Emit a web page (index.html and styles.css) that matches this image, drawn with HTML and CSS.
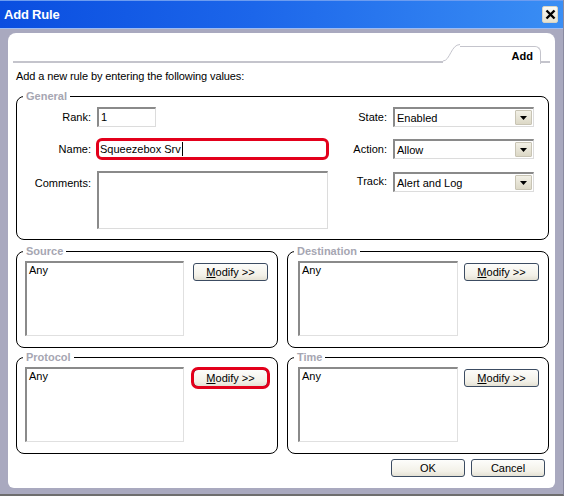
FILE: index.html
```html
<!DOCTYPE html>
<html lang="en">
<head>
<meta charset="utf-8">
<title>Add Rule</title>
<link rel="stylesheet" href="styles.css">
</head>
<body>
<div class="window">
  <div class="titlebar">
    <span class="title">Add Rule</span>
    <span class="close"><svg width="11" height="11" viewBox="0 0 11 11"><path d="M1.5 1.5 L9.5 9.5 M9.5 1.5 L1.5 9.5" stroke="#000" stroke-width="2.4" fill="none"/></svg></span>
  </div>
  <div class="client">
    <div class="panel">
      <div class="tabstrip">
        <div class="tabline"></div>
        <svg class="tabslope" width="17" height="18" viewBox="0 0 17 18"><path d="M0 17 C7 17 8 0.5 17 0.5" stroke="#c4c4cc" stroke-width="1" fill="none"/></svg>
        <div class="tab">Add</div>
        <div class="tabline tabline-end"></div>
      </div>
      <p class="intro">Add a new rule by entering the following values:</p>

      <fieldset class="group general">
        <legend>General</legend>
        <div class="general-grid">
          <span class="lbl">Rank:</span>
          <div class="field rank">1</div>
          <span class="lbl">State:</span>
          <div class="select"><span class="sel-text">Enabled</span><span class="arrow"><svg width="7" height="4" viewBox="0 0 7 4"><path d="M0 0 H7 L3.5 4 Z" fill="#000"/></svg></span></div>

          <span class="lbl">Name:</span>
          <div class="field name hl">Squeezebox Srv<span class="caret"></span></div>
          <span class="lbl">Action:</span>
          <div class="select"><span class="sel-text">Allow</span><span class="arrow"><svg width="7" height="4" viewBox="0 0 7 4"><path d="M0 0 H7 L3.5 4 Z" fill="#000"/></svg></span></div>

          <span class="lbl lbl-top">Comments:</span>
          <div class="field comments"></div>
          <span class="lbl lbl-top2">Track:</span>
          <div class="select select-top"><span class="sel-text">Alert and Log</span><span class="arrow"><svg width="7" height="4" viewBox="0 0 7 4"><path d="M0 0 H7 L3.5 4 Z" fill="#000"/></svg></span></div>
        </div>
      </fieldset>

      <div class="groups">
        <fieldset class="group">
          <legend>Source</legend>
          <div class="group-body">
            <div class="listbox">Any</div>
            <button class="btn"><u>M</u>odify &gt;&gt;</button>
          </div>
        </fieldset>
        <fieldset class="group">
          <legend>Destination</legend>
          <div class="group-body right">
            <div class="listbox">Any</div>
            <button class="btn"><u>M</u>odify &gt;&gt;</button>
          </div>
        </fieldset>
        <fieldset class="group">
          <legend>Protocol</legend>
          <div class="group-body">
            <div class="listbox">Any</div>
            <button class="btn hl"><u>M</u>odify &gt;&gt;</button>
          </div>
        </fieldset>
        <fieldset class="group">
          <legend>Time</legend>
          <div class="group-body right">
            <div class="listbox">Any</div>
            <button class="btn"><u>M</u>odify &gt;&gt;</button>
          </div>
        </fieldset>
      </div>

      <div class="footer">
        <button class="btn">OK</button>
        <button class="btn">Cancel</button>
      </div>
    </div>
  </div>
</div>
</body>
</html>
```

FILE: styles.css
```css
html, body {
  margin: 0;
  padding: 0;
  background: #fff;
}

body {
  font-family: "Liberation Sans", Arial, sans-serif;
  font-size: 11px;
  color: #000;
}

.window {
  width: 564px;
  height: 496px;
  box-sizing: border-box;
  background: #a9a9bf;
  border-bottom: 2px solid #6e6e6e;
  border-right: 1px solid #8a8aa0;
  display: flex;
  flex-direction: column;
}

.titlebar {
  flex: none;
  height: 29px;
  box-sizing: border-box;
  border-top: 1px solid #6c9cf0;
  border-bottom: 1px solid #9cbcf4;
  background: linear-gradient(to right, #0a4ee0 0%, #1c66ea 45%, #3a8ef4 100%);
  display: flex;
  align-items: center;
  justify-content: space-between;
  padding: 0 5px 0 4px;
}

.title {
  color: #fff;
  font-weight: bold;
  font-size: 13px;
  letter-spacing: -0.2px;
}

.close {
  width: 16px;
  height: 17px;
  box-sizing: border-box;
  background: linear-gradient(#fbfaf4, #e6e2d0);
  border: 1px solid #d8d4c4;
  border-radius: 2px;
  display: flex;
  align-items: center;
  justify-content: center;
}

.client {
  flex: 1;
  display: flex;
  padding: 4px 8px 6px 8px;
}

.panel {
  flex: 1;
  background: #fff;
  border-radius: 8px 8px 6px 6px;
  padding: 0 6px 0 8px;
  display: flex;
  flex-direction: column;
}

/* tab strip */
.tabstrip {
  height: 30px;
  margin: 0 -1px 0 -3px;
  display: flex;
  align-items: flex-end;
}

.tabline {
  flex: 1;
  border-bottom: 2px solid #c4c4cc;
}

.tabline-end {
  flex: none;
  width: 9px;
}

.tabslope {
  flex: none;
  display: block;
  margin-bottom: 1px;
}

.tab {
  flex: none;
  width: 81px;
  height: 18px;
  box-sizing: border-box;
  border-top: 1px solid #c4c4cc;
  border-right: 1px solid #c4c4cc;
  border-top-right-radius: 6px;
  font-weight: bold;
  text-align: right;
  padding: 3px 7px 0 0;
  line-height: 13px;
  margin-bottom: -1px;
}

.intro {
  margin: 7px 0 0;
  line-height: 13px;
  letter-spacing: -0.1px;
}

/* group boxes */
.group {
  margin: 0;
  padding: 0;
  border: 1px solid #000;
  border-radius: 8px;
  min-width: 0;
}

.group legend {
  margin-left: 6px;
  padding: 0 3px;
  font-weight: bold;
  color: #a6a6b2;
  line-height: 13px;
}

.general {
  margin-top: 7px;
}

.general-grid {
  display: grid;
  grid-template-columns: 74px 231px 53px 141px;
  grid-template-rows: 20px 20px 58px;
  column-gap: 6px;
  row-gap: 12px;
  padding: 4px 14px 10px 0;
  align-items: center;
}

.lbl {
  text-align: right;
  line-height: 13px;
}

.lbl-top {
  align-self: start;
  margin-top: 6px;
}

.lbl-top2 {
  align-self: start;
  margin-top: 4px;
}

.field {
  height: 20px;
  box-sizing: border-box;
  border-style: solid;
  border-width: 2px 1px 1px 2px;
  border-color: #8a8a8a #dcdcdc #dcdcdc #8a8a8a;
  background: #fff;
  padding: 1px 2px 0;
  line-height: 14px;
  white-space: nowrap;
}

.rank {
  width: 59px;
}

.name.hl {
  border: 3px solid #e3001b;
  border-radius: 6px;
  height: 22px;
  margin: 0 -1px;
  padding: 1px 1px 0;
  line-height: 14px;
}

.caret {
  display: inline-block;
  width: 1px;
  height: 14px;
  background: #000;
  vertical-align: top;
  margin-left: 1px;
}

.comments {
  height: 58px;
}

.select {
  height: 20px;
  box-sizing: border-box;
  border-style: solid;
  border-width: 2px 1px 1px 2px;
  border-color: #8a8a8a #dcdcdc #dcdcdc #8a8a8a;
  background: #fff;
  display: flex;
  align-items: center;
  justify-content: space-between;
  padding: 0 1px 0 2px;
}

.select-top {
  align-self: start;
  margin-top: 1px;
}

.sel-text {
  line-height: 14px;
}

.arrow {
  width: 17px;
  height: 15px;
  box-sizing: border-box;
  background: linear-gradient(#f2f0e6, #dcd8c6);
  border: 1px solid #c8c4b4;
  border-radius: 1px;
  display: flex;
  align-items: center;
  justify-content: center;
}

.arrow svg {
  display: block;
}

.groups {
  margin-top: 5px;
  display: grid;
  grid-template-columns: 262px 262px;
  column-gap: 9px;
  row-gap: 3px;
}

.group-body {
  display: flex;
  align-items: flex-start;
  gap: 9px;
  padding: 3px 0 11px 8px;
}

.group-body.right {
  padding-left: 10px;
  gap: 6px;
}

.listbox {
  width: 159px;
  height: 75px;
  box-sizing: border-box;
  border-style: solid;
  border-width: 2px 1px 1px 2px;
  border-color: #8a8a8a #e0e0e0 #e0e0e0 #8a8a8a;
  padding: 1px 2px;
  line-height: 13px;
}

.group-body.right .listbox {
  width: 160px;
}

.btn {
  width: 75px;
  height: 18px;
  box-sizing: border-box;
  margin-top: 2px;
  padding: 0;
  border: 1px solid #3c4c62;
  border-radius: 3px;
  background: linear-gradient(#fdfdfb 0%, #f3f1e8 70%, #e4e1d4 100%);
  font-family: "Liberation Sans", Arial, sans-serif;
  font-size: 11px;
  color: #000;
  line-height: 15px;
  text-align: center;
}

.btn.hl {
  outline: 3px solid #e3001b;
  outline-offset: -1px;
  border-radius: 5px;
}

.footer {
  margin-top: 5px;
  display: flex;
  justify-content: flex-end;
  gap: 6px;
  padding-right: 4px;
}

.footer .btn {
  width: 74px;
  margin-top: 0;
}
```
